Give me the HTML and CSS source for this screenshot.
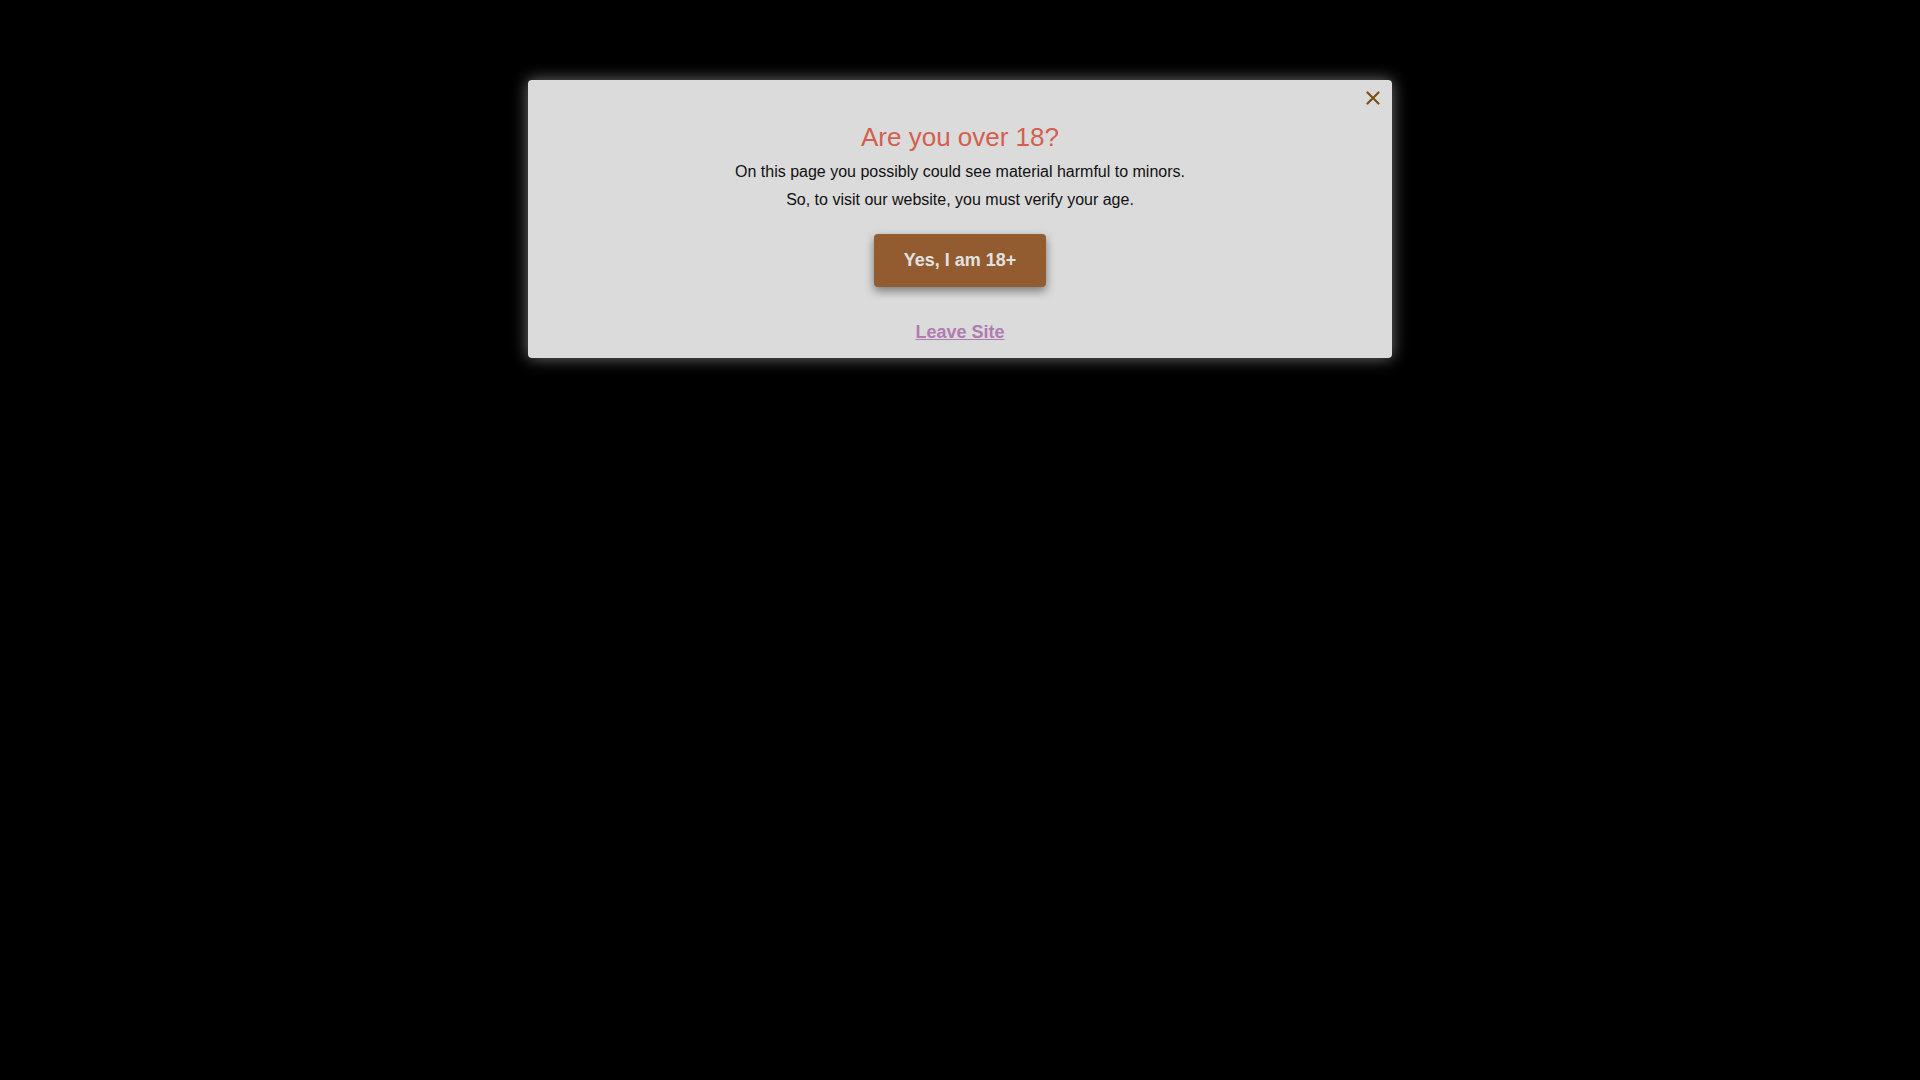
FILE: index.html
```html
<!DOCTYPE html>
<html lang="en">
<head>
<meta charset="utf-8">
<title>Age verification</title>
<link rel="stylesheet" href="styles.css">
</head>
<body>
<div class="overlay">
  <div class="modal">
    <button class="close" aria-label="Close">
      <svg width="14" height="14" viewBox="0 0 14 14"><path d="M1.5 1.5 L12.5 12.5 M12.5 1.5 L1.5 12.5" stroke="#7a5212" stroke-width="2.2" stroke-linecap="round" fill="none"/></svg>
    </button>
    <h2 class="title">Are you over 18?</h2>
    <div class="text">
      <p>On this page you possibly could see material harmful to minors.</p>
      <p>So, to visit our website, you must verify your age.</p>
    </div>
    <button class="yes">Yes, I am 18+</button>
    <a class="leave" href="#">Leave Site</a>
  </div>
</div>
</body>
</html>
```

FILE: styles.css
```css
html, body {
  margin: 0;
  padding: 0;
  background: #000;
  height: 100%;
}
body {
  font-family: "Liberation Sans", Arial, sans-serif;
}
.overlay {
  padding-top: 80px;
}
.modal {
  position: relative;
  width: 864px;
  margin: 0 auto;
  box-sizing: border-box;
  background: #dbdbdb;
  border-radius: 4px;
  box-shadow: 0 0 16px rgba(255, 255, 255, 0.45);
  padding: 42px 30px 15px;
  display: flex;
  flex-direction: column;
  align-items: center;
  text-align: center;
}
.close {
  position: absolute;
  top: 11px;
  right: 12px;
  width: 14px;
  height: 14px;
  padding: 0;
  border: 0;
  background: transparent;
  display: flex;
}
.title {
  margin: 0;
  font-size: 26px;
  line-height: 30px;
  font-weight: normal;
  color: #d35f4f;
}
.text {
  margin-top: 6px;
}
.text p {
  margin: 0;
  font-size: 16px;
  line-height: 28px;
  color: #111;
}
.yes {
  margin-top: 20px;
  font-family: "Liberation Sans", Arial, sans-serif;
  font-size: 18px;
  font-weight: bold;
  line-height: 21px;
  padding: 16px 30px;
  border: 0;
  border-radius: 4px;
  background: #935b30;
  color: #e2e2e2;
  box-shadow: 0 4px 10px rgba(0, 0, 0, 0.45);
}
.leave {
  margin-top: 35px;
  display: block;
  font-size: 18px;
  line-height: 21px;
  font-weight: bold;
  color: #b07db1;
  text-decoration: underline;
}
```
